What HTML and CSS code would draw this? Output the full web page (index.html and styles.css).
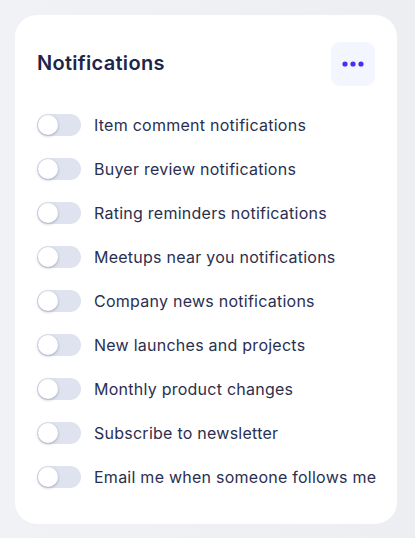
FILE: index.html
```html
<!DOCTYPE html>
<html>
<head>
<meta charset="utf-8">
<link rel="stylesheet" href="styles.css">
</head>
<body>
<div class="card">
  <div class="header">
    <h2 class="title">Notifications</h2>
    <button class="more" aria-label="More">
      <svg width="22" height="6" viewBox="0 0 22 6"><circle cx="3" cy="3" r="2.6" fill="#4a2df2"/><circle cx="11" cy="3" r="2.6" fill="#4a2df2"/><circle cx="19" cy="3" r="2.6" fill="#4a2df2"/></svg>
    </button>
  </div>
  <ul class="list">
    <li class="row"><span class="toggle"><span class="knob"></span></span><span class="label">Item comment notifications</span></li>
    <li class="row"><span class="toggle"><span class="knob"></span></span><span class="label">Buyer review notifications</span></li>
    <li class="row"><span class="toggle"><span class="knob"></span></span><span class="label">Rating reminders notifications</span></li>
    <li class="row"><span class="toggle"><span class="knob"></span></span><span class="label">Meetups near you notifications</span></li>
    <li class="row"><span class="toggle"><span class="knob"></span></span><span class="label">Company news notifications</span></li>
    <li class="row"><span class="toggle"><span class="knob"></span></span><span class="label">New launches and projects</span></li>
    <li class="row"><span class="toggle"><span class="knob"></span></span><span class="label">Monthly product changes</span></li>
    <li class="row"><span class="toggle"><span class="knob"></span></span><span class="label">Subscribe to newsletter</span></li>
    <li class="row"><span class="toggle"><span class="knob"></span></span><span class="label">Email me when someone follows me</span></li>
  </ul>
</div>
</body>
</html>
```
FILE: styles.css
```css
html, body {
  margin: 0;
  padding: 0;
}
body {
  width: 415px;
  height: 538px;
  background: linear-gradient(90deg, #f1f2f5 0%, #eceef2 100%);
  font-family: Inter, "Noto Sans", "Liberation Sans", sans-serif;
  padding: 15px 18px 14px 15px;
  box-sizing: border-box;
}
.card {
  background: #ffffff;
  border-radius: 22px;
  padding: 27px 22px 25px 22px;
  box-sizing: border-box;
  width: 382px;
}
.header {
  display: flex;
  align-items: center;
  justify-content: space-between;
  height: 44px;
  margin-bottom: 17px;
}
.title {
  margin: -3px 0 0 0;
  font-size: 20px;
  font-weight: 600;
  color: #1f2549;
  letter-spacing: 0.3px;
}
.more {
  width: 44px;
  height: 44px;
  border: none;
  border-radius: 9px;
  background: #f3f6ff;
  display: flex;
  align-items: center;
  justify-content: center;
  padding: 0;
}
.list {
  list-style: none;
  margin: 0;
  padding: 0;
}
.row {
  display: flex;
  align-items: center;
  height: 44px;
}
.toggle {
  position: relative;
  width: 44px;
  height: 22px;
  border-radius: 11px;
  background: #dfe3ef;
  flex: none;
  margin-right: 13px;
}
.knob {
  position: absolute;
  left: 1px;
  top: 1px;
  width: 20px;
  height: 20px;
  border-radius: 50%;
  background: #ffffff;
  box-shadow: 0 1px 3px rgba(40, 50, 90, 0.35);
}
.label {
  font-size: 16px;
  color: #2a2f50;
  white-space: nowrap;
  letter-spacing: 0.25px;
}
```
